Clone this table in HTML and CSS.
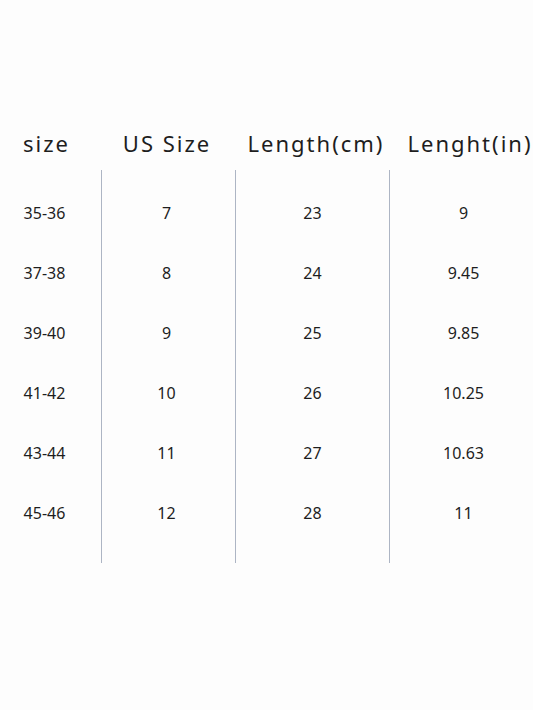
FILE: index.html
```html
<!DOCTYPE html>
<html>
<head>
<meta charset="utf-8">
<link rel="stylesheet" href="styles.css">
</head>
<body>
<div class="chart">
  <div class="head">
    <div class="h c1">size</div>
    <div class="h c2">US Size</div>
    <div class="h c3">Length(cm)</div>
    <div class="h c4">Lenght(in)</div>
  </div>
  <div class="body">
    <div class="col c1">
      <div class="cell">35-36</div><div class="cell">37-38</div><div class="cell">39-40</div>
      <div class="cell">41-42</div><div class="cell">43-44</div><div class="cell">45-46</div>
    </div>
    <div class="col c2">
      <div class="cell">7</div><div class="cell">8</div><div class="cell">9</div>
      <div class="cell">10</div><div class="cell">11</div><div class="cell">12</div>
    </div>
    <div class="col c3">
      <div class="cell">23</div><div class="cell">24</div><div class="cell">25</div>
      <div class="cell">26</div><div class="cell">27</div><div class="cell">28</div>
    </div>
    <div class="col c4">
      <div class="cell">9</div><div class="cell">9.45</div><div class="cell">9.85</div>
      <div class="cell">10.25</div><div class="cell">10.63</div><div class="cell">11</div>
    </div>
  </div>
</div>
</body>
</html>
```
FILE: styles.css
```css
html, body {
  margin: 0;
  padding: 0;
  background: #fdfdfd;
}
.chart {
  width: 533px;
  height: 710px;
  font-family: "Noto Sans", "Open Sans", sans-serif;
  color: #1e1e1e;
  padding-top: 127px;
  box-sizing: border-box;
}
.head, .body {
  display: grid;
  grid-template-columns: 101px 134px 154px 144px;
}
.h {
  font-size: 22px;
  letter-spacing: 2px;
  line-height: 32px;
  text-align: center;
  white-space: nowrap;
}
.head .c1 { padding-right: 8px; }
.head .c2 { padding-right: 2px; }
.head .c3 { padding-left: 8px; }
.head .c4 { padding-left: 18px; }
.body {
  margin-top: 11px;
}
.col {
  height: 393px;
  padding-top: 13px;
  box-sizing: border-box;
}
.col + .col {
  border-left: 1px solid #adb5c4;
}
.cell {
  height: 60px;
  line-height: 60px;
  font-size: 16px;
  text-align: center;
}
.body .c1 .cell { padding-right: 12px; }
.body .c2 .cell { padding-right: 4px; }
.body .c4 .cell { padding-left: 4px; }
```
